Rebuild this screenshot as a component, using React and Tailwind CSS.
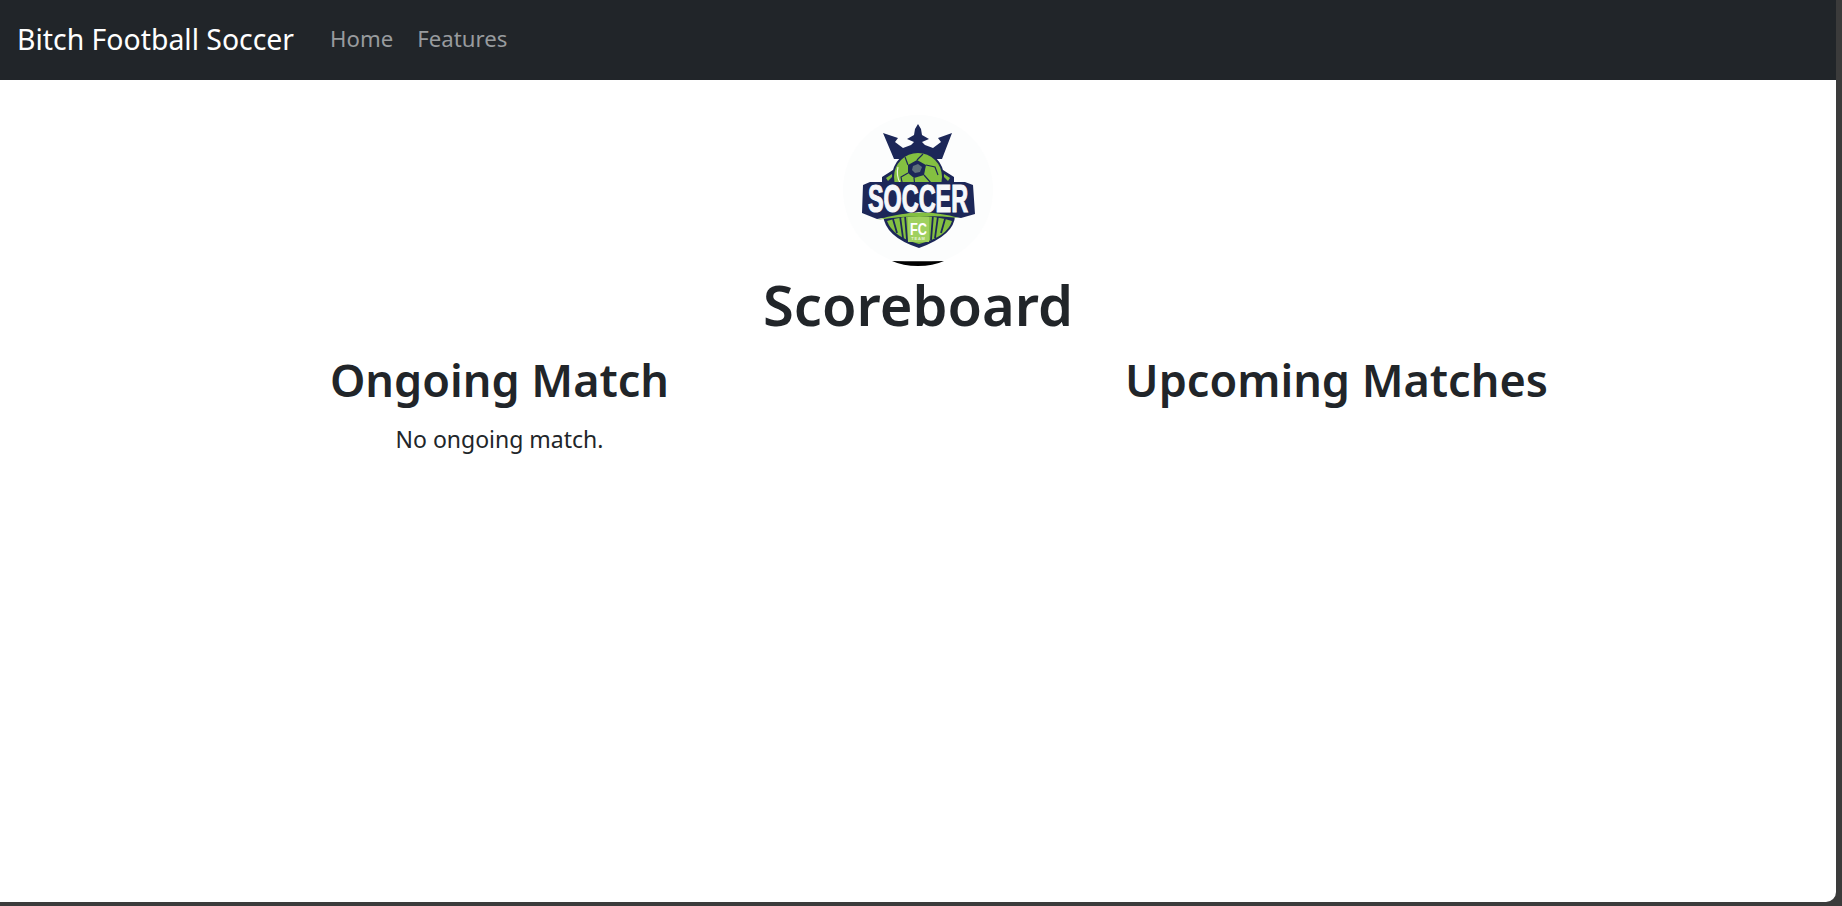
const NAVY = "#1c2758";
const GREEN = "#84c041";

const SoccerLogo = () => (
  <svg viewBox="0 0 150 150" className="block w-[150px] h-[150px] overflow-visible">
    <circle cx="75" cy="75" r="75" fill="#fcfdfd" />
    {/* black sliver at the foot of the badge */}
    <path d="M49 146 Q75 146.5 101 146 Q90 151 75 151 Q60 151 49 146Z" fill="#000" />
    {/* crown */}
    <path
      d="M40 18 L55 23 L52 27 L60 33 L68 30 L71 27 L64 24 L71 20 L72 14 L75 9 L78 14 L79 20 L86 24 L79 27 L82 30 L90 33 L98 27 L95 23 L109 18 L99 44 L51 44Z"
      fill={NAVY}
    />
    {/* shield wings */}
    <path d="M39 62 L50 55 L100 55 L111 62 L111 80 L39 80Z" fill={NAVY} />
    <path d="M43 63 L49 59 L50 61 L45 66Z" fill={GREEN} />
    <path d="M107 63 L101 59 L100 61 L105 66Z" fill={GREEN} />
    {/* ball */}
    <circle cx="75" cy="62" r="26" fill={NAVY} />
    <circle cx="75" cy="62" r="24" fill={GREEN} />
    <path d="M65 50 L74 45 L83 50 L81 60 L71 63 L65 58Z" fill={NAVY} />
    <path d="M70 51 L75 49 L79 52 L77 57 L72 58 L69 55Z" fill="#5d6f7a" />
    <path d="M65 58 L58 62 L60 72 M83 50 L92 52 L95 60 M81 60 L88 68 L86 76 M71 63 L72 72 M65 50 L62 42 M74 45 L80 39" stroke={NAVY} strokeWidth="1.2" fill="none" />
    <path d="M55 52 Q53 60 57 68" stroke="#eaf5dc" strokeWidth="1.2" fill="none" />
    <path d="M66 70 L74 72" stroke="#d8ddd5" strokeWidth="2" fill="none" />
    {/* lower green shield */}
    <path d="M40 100 L112 100 Q112 120 76 133 Q42 122 40 100Z" fill={NAVY} />
    <path d="M44 106 Q76 96 109 106 Q104 122 76 129 Q50 122 44 106Z" fill={GREEN} />
    <path d="M50 104 L54 118 M57 101 L60 123 M62 100 L64 125 M90 100 L88 125 M95 101 L92 123 M102 104 L98 118" stroke={NAVY} strokeWidth="1.8" fill="none" />
    <rect x="65" y="102" width="21" height="25" fill="#9fd05f" />
    {/* wordmark backing */}
    <path d="M20 70 L27 67 L122 67 L130 70 L132 99 L118 103 L76 97 L34 104 L19 98Z" fill={NAVY} />
    <path d="M34 105 Q76 91 116 103 Q76 98 34 105Z" fill={GREEN} />
    <text
      transform="translate(75 97) scale(0.6 1)"
      textAnchor="middle"
      fontFamily="Liberation Sans, sans-serif"
      fontWeight="700"
      fontSize="39"
      fill="#f7f8fb"
      stroke="#f7f8fb"
      strokeWidth="1.2"
    >
      SOCCER
    </text>
    <text transform="translate(75.5 120) scale(0.75 1)" textAnchor="middle" fontFamily="Liberation Sans, sans-serif" fontWeight="700" fontSize="17" fill="#fff">
      FC
    </text>
    <text x="75.5" y="125" textAnchor="middle" fontFamily="Liberation Sans, sans-serif" fontWeight="700" fontSize="4" letterSpacing="0.8" fill="#e6f2d5">
      TEAM
    </text>
  </svg>
);

const App = () => {
  return (
    <div className="h-screen bg-[#3b3b3b] pr-[6px] pb-[4px] overflow-hidden font-['Noto_Sans',sans-serif]">
      <div className="h-full bg-white rounded-br-[10px] overflow-hidden text-[#212529]">
        <nav className="h-[80px] bg-[#212529] flex items-center pl-[17px] pb-[2px]">
          <a className="text-[28.4px] text-white mr-[24px]">Bitch Football Soccer</a>
          <ul className="flex text-[22.2px] text-[#989b9e]">
            <li className="px-[12px]">Home</li>
            <li className="px-[12px]">Features</li>
          </ul>
        </nav>

        <main className="text-center">
          <div className="flex justify-center pt-[35px]">
            <SoccerLogo />
          </div>
          <h1 className="text-[56px] leading-[78px] font-semibold">Scoreboard</h1>
          <div className="mx-auto w-[1674px] grid grid-cols-2 mt-[7px]">
            <section>
              <h2 className="text-[45px] leading-[60px] font-semibold">Ongoing Match</h2>
              <p className="text-[23px] leading-[36px] mt-[11px]">No ongoing match.</p>
            </section>
            <section>
              <h2 className="text-[45px] leading-[60px] font-semibold">Upcoming Matches</h2>
            </section>
          </div>
        </main>
      </div>
    </div>
  );
};

export default App;
